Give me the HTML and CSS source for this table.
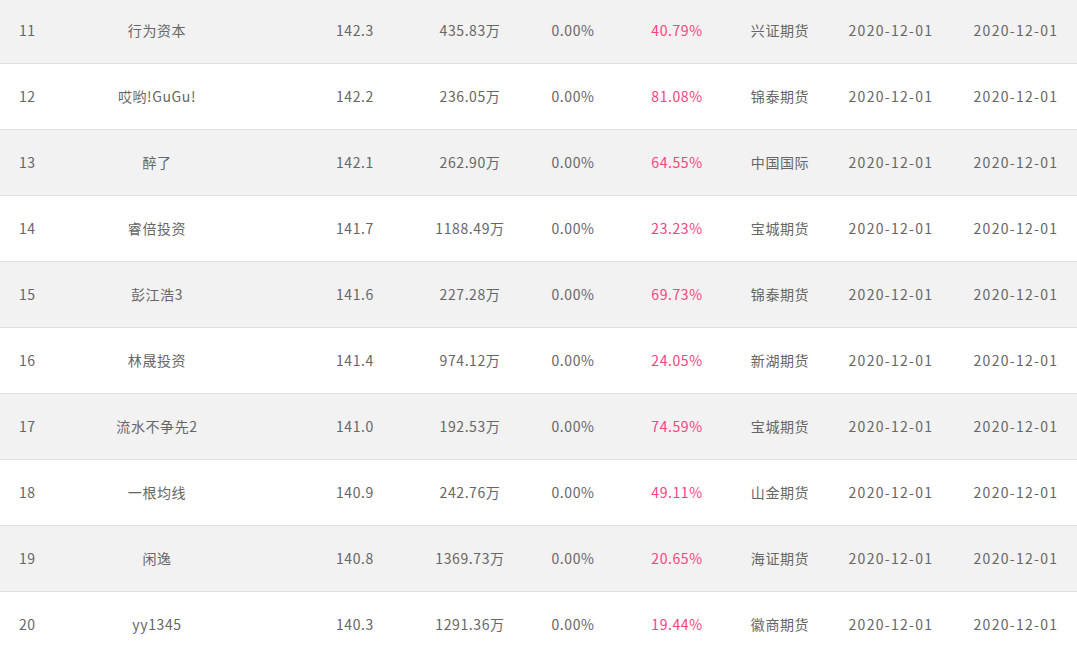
FILE: index.html
```html
<!DOCTYPE html>
<html lang="zh-CN">
<head>
<meta charset="utf-8">
<title>排行</title>
<link rel="stylesheet" href="styles.css">
</head>
<body>
<div class="table">
  <div class="row alt"><span class="rank">11</span><span>行为资本</span><span>142.3</span><span>435.83万</span><span>0.00%</span><span class="pink">40.79%</span><span>兴证期货</span><span class="date">2020-12-01</span><span class="date">2020-12-01</span></div>
  <div class="row"><span class="rank">12</span><span>哎哟!GuGu!</span><span>142.2</span><span>236.05万</span><span>0.00%</span><span class="pink">81.08%</span><span>锦泰期货</span><span class="date">2020-12-01</span><span class="date">2020-12-01</span></div>
  <div class="row alt"><span class="rank">13</span><span>醉了</span><span>142.1</span><span>262.90万</span><span>0.00%</span><span class="pink">64.55%</span><span>中国国际</span><span class="date">2020-12-01</span><span class="date">2020-12-01</span></div>
  <div class="row"><span class="rank">14</span><span>睿倍投资</span><span>141.7</span><span>1188.49万</span><span>0.00%</span><span class="pink">23.23%</span><span>宝城期货</span><span class="date">2020-12-01</span><span class="date">2020-12-01</span></div>
  <div class="row alt"><span class="rank">15</span><span>彭江浩3</span><span>141.6</span><span>227.28万</span><span>0.00%</span><span class="pink">69.73%</span><span>锦泰期货</span><span class="date">2020-12-01</span><span class="date">2020-12-01</span></div>
  <div class="row"><span class="rank">16</span><span>林晟投资</span><span>141.4</span><span>974.12万</span><span>0.00%</span><span class="pink">24.05%</span><span>新湖期货</span><span class="date">2020-12-01</span><span class="date">2020-12-01</span></div>
  <div class="row alt"><span class="rank">17</span><span>流水不争先2</span><span>141.0</span><span>192.53万</span><span>0.00%</span><span class="pink">74.59%</span><span>宝城期货</span><span class="date">2020-12-01</span><span class="date">2020-12-01</span></div>
  <div class="row"><span class="rank">18</span><span>一根均线</span><span>140.9</span><span>242.76万</span><span>0.00%</span><span class="pink">49.11%</span><span>山金期货</span><span class="date">2020-12-01</span><span class="date">2020-12-01</span></div>
  <div class="row alt"><span class="rank">19</span><span>闲逸</span><span>140.8</span><span>1369.73万</span><span>0.00%</span><span class="pink">20.65%</span><span>海证期货</span><span class="date">2020-12-01</span><span class="date">2020-12-01</span></div>
  <div class="row"><span class="rank">20</span><span>yy1345</span><span>140.3</span><span>1291.36万</span><span>0.00%</span><span class="pink">19.44%</span><span>徽商期货</span><span class="date">2020-12-01</span><span class="date">2020-12-01</span></div>
</div>
</body>
</html>
```

FILE: styles.css
```css
html, body {
  margin: 0;
  padding: 0;
  background: #fff;
  overflow: hidden;
}
body {
  font-family: "Noto Sans CJK SC", "Noto Sans", sans-serif;
  font-size: 14px;
  color: #666;
}
.table {
  margin-top: -2px;
}
.row {
  display: grid;
  grid-template-columns: 20px 274px 122px 108px 98px 110px 96px 126px 124px;
  height: 65px;
  border-bottom: 1px solid #e0e0e0;
  align-items: center;
  background: #fff;
}
.row.alt {
  background: #f2f2f2;
}
.row span {
  display: flex;
  justify-content: center;
  white-space: nowrap;
  letter-spacing: 0.6px;
  padding-bottom: 2px;
}
.row .date {
  letter-spacing: 1.3px;
}
.row .rank {
  justify-content: flex-start;
  padding-left: 19px;
}
.pink {
  color: #ff4081;
}
```
